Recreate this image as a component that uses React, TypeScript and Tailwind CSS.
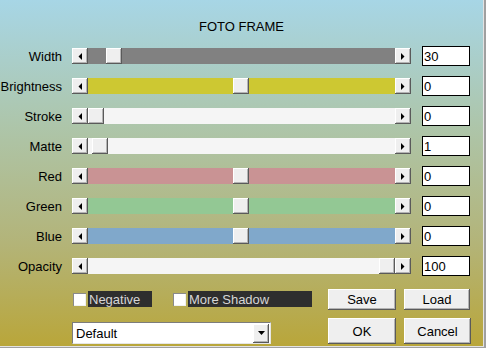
import React from "react";

const font = "font-['Liberation_Sans',Arial,sans-serif]";
const bevel =
    "bg-[#efefef] shadow-[inset_-1px_-1px_#5a5a5a,inset_1px_1px_#ffffff,inset_-2px_-2px_#b4b4b4]";

const rows = [
    { label: "Width", track: "bg-[#818181]", thumb: 18, value: "30" },
    { label: "Brightness", track: "bg-[#cdc832]", thumb: 145, value: "0" },
    { label: "Stroke", track: "bg-[#f5f5f5]", thumb: 0, value: "0" },
    { label: "Matte", track: "bg-[#f5f5f5]", thumb: 4, value: "1" },
    { label: "Red", track: "bg-[#c99394]", thumb: 145, value: "0" },
    { label: "Green", track: "bg-[#93c894]", thumb: 145, value: "0" },
    { label: "Blue", track: "bg-[#80a8cb]", thumb: 145, value: "0" },
    { label: "Opacity", track: "bg-[#f5f5f5]", thumb: 291, value: "100" },
];

const Arrow = ({ dir }: { dir: "left" | "right" | "down" }) => {
    const pts =
        dir === "left" ? "4,0 4,7 0.5,3.5" : dir === "right" ? "0,0 0,7 3.5,3.5" : "0,0 7,0 3.5,4";
    const w = dir === "down" ? 7 : 4;
    const h = dir === "down" ? 4 : 7;
    return (
        <svg width={w} height={h} viewBox={`0 0 ${w} ${h}`}>
            <polygon points={pts} fill="#000" />
        </svg>
    );
};

const ScrollBar = ({ track, thumb }: { track: string; thumb: number }) => (
    <div className="flex h-[16px] w-[339px]">
        <div className={`flex h-[16px] w-[16px] items-center justify-center ${bevel}`}>
            <Arrow dir="left" />
        </div>
        <div className={`flex flex-1 ${track}`}>
            <div style={{ marginLeft: thumb }} className={`h-[16px] w-[16px] ${bevel}`} />
        </div>
        <div className={`flex h-[16px] w-[16px] items-center justify-center ${bevel}`}>
            <Arrow dir="right" />
        </div>
    </div>
);

const Check = ({ label, width }: { label: string; width: string }) => (
    <div className="flex items-center gap-[2px]">
        <div className="h-[13px] w-[13px] bg-white shadow-[inset_1px_1px_#8a8a8a,inset_-1px_-1px_#f0f0f0]" />
        <div className={`flex h-[16px] items-center bg-[#2e2e2e] pl-[1px] text-[#d6d6d6] ${width}`}>
            {label}
        </div>
    </div>
);

const Button = ({ label, w, h }: { label: string; w: string; h: string }) => (
    <div className={`flex items-center justify-center text-black ${w} ${h} ${bevel}`}>{label}</div>
);

export default function App() {
    return (
        <div className={`h-[348px] w-[486px] bg-[#a0a0a0] text-[13px] leading-[15px] ${font}`}>
            <div className="h-[347px] w-[484px] border-r border-b border-[#e2e2e2] bg-[linear-gradient(to_bottom,#a7d6e6_0%,#adc6ac_35%,#b3b479_70%,#b9a63a_100%)]">
                <div className="pt-[19px] text-center text-black">FOTO FRAME</div>
                <div className="mt-[7px] flex flex-col">
                    {rows.map((r) => (
                        <div key={r.label} className="flex h-[30px] items-center">
                            <div className="w-[62px] text-right text-black">{r.label}</div>
                            <div className="ml-[10px]">
                                <ScrollBar track={r.track} thumb={r.thumb} />
                            </div>
                            <div className="ml-[11px] flex h-[20px] w-[48px] items-center border border-black bg-white pl-[1px] text-black">
                                {r.value}
                            </div>
                        </div>
                    ))}
                </div>
                <div className="mt-[7px] flex h-[22px] items-center pl-[72px]">
                    <div className="flex w-[256px] items-center gap-[21px] pl-[1px]">
                        <Check label="Negative" width="w-[64px]" />
                        <Check label="More Shadow" width="w-[124px]" />
                    </div>
                    <div className="flex gap-[8px]">
                        <Button label="Save" w="w-[68px]" h="h-[21px]" />
                        <Button label="Load" w="w-[66px]" h="h-[21px]" />
                    </div>
                </div>
                <div className="mt-[8px] flex h-[26px] items-end pl-[72px]">
                    <div className="w-[256px]">
                        <div className="flex h-[22px] w-[199px] items-center justify-between border-t border-l border-[#7c7c7c] border-r border-b border-r-[#e6e6e6] border-b-[#e6e6e6] bg-white pl-[3px] text-black">
                            <span>Default</span>
                            <div className={`mr-[1px] flex h-[19px] w-[16px] items-center justify-center ${bevel}`}>
                                <Arrow dir="down" />
                            </div>
                        </div>
                    </div>
                    <div className="flex gap-[8px]">
                        <Button label="OK" w="w-[68px]" h="h-[26px]" />
                        <Button label="Cancel" w="w-[67px]" h="h-[26px]" />
                    </div>
                </div>
            </div>
        </div>
    );
}
